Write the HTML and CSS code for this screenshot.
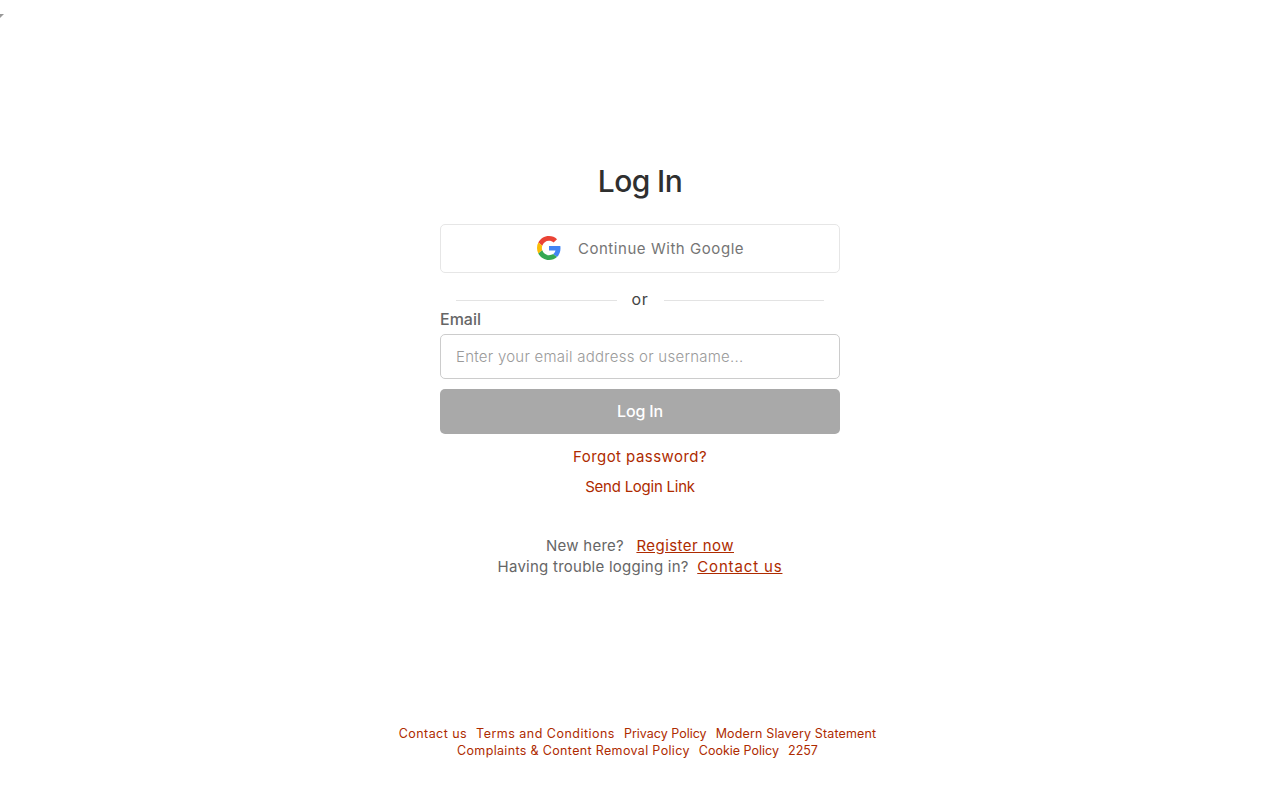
FILE: index.html
```html
<!DOCTYPE html>
<html lang="en">
<head>
<meta charset="utf-8">
<title>Log In</title>
<link rel="stylesheet" href="styles.css">
</head>
<body>
<div class="corner-mark"></div>
<main class="login">
  <h1 class="title">Log In</h1>
  <a class="google-btn" href="#">
    <svg class="google-icon" viewBox="0 0 48 48" width="24" height="24" aria-hidden="true">
      <path fill="#EA4335" d="M24 9.5c3.54 0 6.71 1.22 9.21 3.6l6.85-6.85C35.9 2.38 30.47 0 24 0 14.62 0 6.51 5.38 2.56 13.22l7.98 6.19C12.43 13.72 17.74 9.5 24 9.5z"/>
      <path fill="#4285F4" d="M46.98 24.55c0-1.57-.15-3.09-.38-4.55H24v9.02h12.94c-.58 2.96-2.26 5.48-4.78 7.18l7.73 6c4.51-4.18 7.09-10.36 7.09-17.65z"/>
      <path fill="#FBBC05" d="M10.53 28.59c-.48-1.45-.76-2.99-.76-4.59s.27-3.14.76-4.59l-7.98-6.19C.92 16.46 0 20.12 0 24c0 3.88.92 7.54 2.56 10.78l7.97-6.19z"/>
      <path fill="#34A853" d="M24 48c6.48 0 11.93-2.13 15.89-5.81l-7.73-6c-2.15 1.45-4.92 2.3-8.16 2.3-6.26 0-11.57-4.22-13.47-9.91l-7.98 6.19C6.51 42.62 14.62 48 24 48z"/>
    </svg>
    <span class="google-label">Continue With Google</span>
  </a>
  <div class="divider"><span class="rule"></span><span class="divider-text">or</span><span class="rule"></span></div>
  <label class="field-label" for="email">Email</label>
  <input class="field-input" id="email" type="text" placeholder="Enter your email address or username...">
  <button class="submit" type="button">Log In</button>
  <a class="action-link first" href="#">Forgot password?</a>
  <a class="action-link second" href="#">Send Login Link</a>
  <div class="help">
    <p class="help-line first-help">New here? <a class="help-link register" href="#">Register now</a></p>
    <p class="help-line">Having trouble logging in? <a class="help-link contact" href="#">Contact us</a></p>
  </div>
</main>
<footer class="footer">
  <nav class="footer-line">
    <a class="sp-4" href="#">Contact us</a><a class="sp-5" href="#">Terms and Conditions</a><a href="#">Privacy Policy</a><a class="sp-2" href="#">Modern Slavery Statement</a>
  </nav>
  <nav class="footer-line">
    <a class="sp-3" href="#">Complaints &amp; Content Removal Policy</a><a href="#">Cookie Policy</a><a href="#">2257</a>
  </nav>
</footer>
</body>
</html>
```

FILE: styles.css
```css
* { box-sizing: border-box; }
html, body { margin: 0; height: 100%; }
body {
  position: relative;
  background: #fff;
  font-family: "Inter", "Open Sans", sans-serif;
  color: #666;
  overflow: hidden;
}
a { color: #ae2b00; text-decoration: none; }
.corner-mark {
  position: absolute;
  left: 0;
  top: 14px;
  width: 0;
  height: 0;
  border-top: 4px solid #999;
  border-right: 4px solid transparent;
}
.login {
  width: 400px;
  margin: 0 auto;
  padding-top: 160px;
  display: flex;
  flex-direction: column;
  align-items: center;
}
.title {
  margin: 0 0 22px;
  font-size: 30px;
  line-height: 42px;
  font-weight: 500;
  color: #2f2f2f;
  letter-spacing: -0.6px;
}
.google-btn {
  width: 100%;
  height: 49px;
  display: flex;
  align-items: center;
  justify-content: center;
  gap: 17px;
  border: 1px solid #e6e6e6;
  border-radius: 5px;
  background: #fff;
}
.google-icon { margin-top: -1px; margin-left: 1px; }
.google-label { font-size: 15px; color: #757575; letter-spacing: 0.55px; }
.divider {
  width: 100%;
  height: 20px;
  margin-top: 17px;
  padding: 0 16px;
  display: flex;
  align-items: center;
  gap: 15px;
}
.rule { flex: 1; height: 1px; background: #e3e3e3; }
.divider-text { width: 17px; text-align: center; font-size: 16px; line-height: 18px; color: #444; letter-spacing: 0.6px; height: 20px; }
.field-label {
  align-self: flex-start;
  font-size: 16px;
  line-height: 18px;
  font-weight: 500;
  color: #666;
  height: 24px;
}
.field-input {
  width: 100%;
  height: 45px;
  padding: 0 15px;
  border: 1px solid #ccc;
  border-radius: 5px;
  font: 300 15px "Inter", sans-serif;
  letter-spacing: 0.25px;
  color: #333;
  outline: none;
}
.field-input::placeholder { color: #9a9a9a; opacity: 1; }
.submit {
  width: 100%;
  height: 45px;
  margin-top: 10px;
  padding: 0 0 2px;
  border: 0;
  border-radius: 5px;
  background: #a9a9a9;
  color: #fff;
  font: 500 16px "Inter", sans-serif;
  letter-spacing: -0.15px;
}
.action-link { font-size: 15px; line-height: 30px; }
.action-link.first { margin-top: 8px; letter-spacing: 0.45px; }
.action-link.second { letter-spacing: -0.25px; }
.help { margin-top: 33px; text-align: center; }
.help-line { margin: 0; font-size: 15px; line-height: 21px; letter-spacing: 0.25px; color: #666; }
.help-link { margin-left: 4px; text-decoration: underline; }
.help-link.register { margin-left: 8px; letter-spacing: 0.45px; }
.help-link.contact { letter-spacing: 0.85px; }
.footer {
  margin-top: 148px;
  padding-right: 5px;
  text-align: center;
  font-size: 12.5px;
  line-height: 17px;
}
.footer-line { display: flex; justify-content: center; gap: 9px; }
.sp-2 { letter-spacing: 0.15px; }
.sp-3 { letter-spacing: 0.34px; }
.sp-4 { letter-spacing: 0.45px; }
.sp-5 { letter-spacing: 0.48px; }
```
